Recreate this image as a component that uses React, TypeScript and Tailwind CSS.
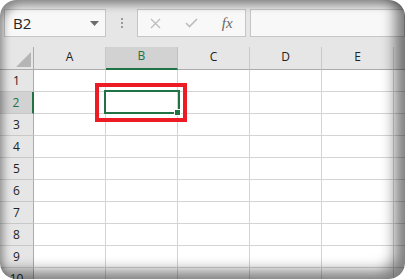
import React from 'react';

const COLS = ['A', 'B', 'C', 'D', 'E', ''];
const ROWS = [1, 2, 3, 4, 5, 6, 7, 8, 9, 10];

export default function App() {
  return (
    <div
      className="w-[405px] h-[279px] bg-white relative overflow-hidden"
      style={{ fontFamily: '"Open Sans", "Liberation Sans", sans-serif' }}
    >
      <div className="w-full h-full rounded-[16px] overflow-hidden bg-[#e6e6e6] flex flex-col relative">
        {/* formula bar */}
        <div className="h-[47px] shrink-0 pt-[9px] pl-[4px] flex items-start">
          <div className="w-[102px] h-[28px] shrink-0 border border-[#c6c6c6] bg-[#f8f8f8] flex items-center justify-between pl-[8px] pr-[6px]">
            <span className="text-[15px] leading-none text-[#222]">B2</span>
            <svg width="9" height="5" viewBox="0 0 9 5">
              <path d="M0 0 H9 L4.5 5 Z" fill="#6b6b6b" />
            </svg>
          </div>
          <div className="w-[31px] h-[28px] shrink-0 flex flex-col items-center justify-center gap-[2px]">
            <div className="w-[2px] h-[2px] bg-[#9a9a9a]" />
            <div className="w-[2px] h-[2px] bg-[#9a9a9a]" />
            <div className="w-[2px] h-[2px] bg-[#9a9a9a]" />
          </div>
          <div className="w-[109px] h-[28px] shrink-0 border border-[#c6c6c6] bg-[#f8f8f8] flex items-center">
            <div className="w-[36px] flex justify-center">
              <svg width="11" height="11" viewBox="0 0 11 11">
                <path d="M1 1 L10 10 M10 1 L1 10" stroke="#bcbcbc" strokeWidth="1.3" />
              </svg>
            </div>
            <div className="w-[36px] flex justify-center">
              <svg width="13" height="10" viewBox="0 0 13 10">
                <path d="M1 5 L4.5 8.5 L12 1" stroke="#bcbcbc" strokeWidth="1.6" fill="none" />
              </svg>
            </div>
            <div className="w-[36px] flex justify-center">
              <span
                className="italic text-[15px] leading-none text-[#666]"
                style={{ fontFamily: '"Liberation Serif", serif' }}
              >
                fx
              </span>
            </div>
          </div>
          <div className="ml-[4px] flex-1 h-[28px] border border-[#c6c6c6] bg-[#f8f8f8]" />
        </div>

        {/* column headers */}
        <div className="flex h-[23px] shrink-0">
          <div className="w-[34px] shrink-0 border-r border-b border-[#ababab] flex items-end justify-end pr-[2px] pb-[2px]">
            <svg width="15" height="15" viewBox="0 0 15 15">
              <path d="M15 0 L15 15 L0 15 Z" fill="#b5b5b5" />
            </svg>
          </div>
          {COLS.map((c, i) => (
            <div
              key={i}
              className={
                c === 'B'
                  ? 'w-[72px] shrink-0 border-r border-[#c0c0c0] border-b-2 border-b-[#217346] bg-[#d2d2d2] flex items-center justify-center text-[12px] text-[#217346]'
                  : 'w-[72px] shrink-0 border-r border-[#c8c8c8] border-b border-b-[#ababab] flex items-center justify-center text-[12px] text-[#222]'
              }
            >
              <span className="-mt-[3px]">{c}</span>
            </div>
          ))}
        </div>

        {/* rows */}
        {ROWS.map((r) => (
          <div key={r} className="flex h-[22px] shrink-0">
            <div
              className={
                r === 2
                  ? 'w-[34px] shrink-0 bg-[#d2d2d2] border-r-2 border-r-[#217346] border-b border-b-[#c8c8c8] flex items-center justify-center text-[12px] text-[#217346]'
                  : 'w-[34px] shrink-0 border-r border-r-[#ababab] border-b border-b-[#c8c8c8] flex items-center justify-center text-[12px] text-[#222]'
              }
            >
              {r}
            </div>
            {COLS.map((c, i) => (
              <div key={i} className="w-[72px] shrink-0 bg-white border-r border-b border-[#d4d4d4]" />
            ))}
          </div>
        ))}

        {/* selection */}
        <div className="absolute left-[104px] top-[90px] w-[76px] h-[24px] border-2 border-[#217346]" />
        <div className="absolute left-[175px] top-[110px] w-[5px] h-[5px] bg-[#217346] ring-1 ring-white" />
        {/* red highlight */}
        <div className="absolute left-[95px] top-[83px] w-[92px] h-[39px] border-4 border-[#ed1c24]" />

        {/* vignette shadow */}
        <div className="absolute inset-0 rounded-[16px] pointer-events-none shadow-[inset_-12px_-10px_14px_-2px_rgba(0,0,0,0.5),inset_6px_8px_9px_-3px_rgba(0,0,0,0.4)]" />
      </div>
    </div>
  );
}
